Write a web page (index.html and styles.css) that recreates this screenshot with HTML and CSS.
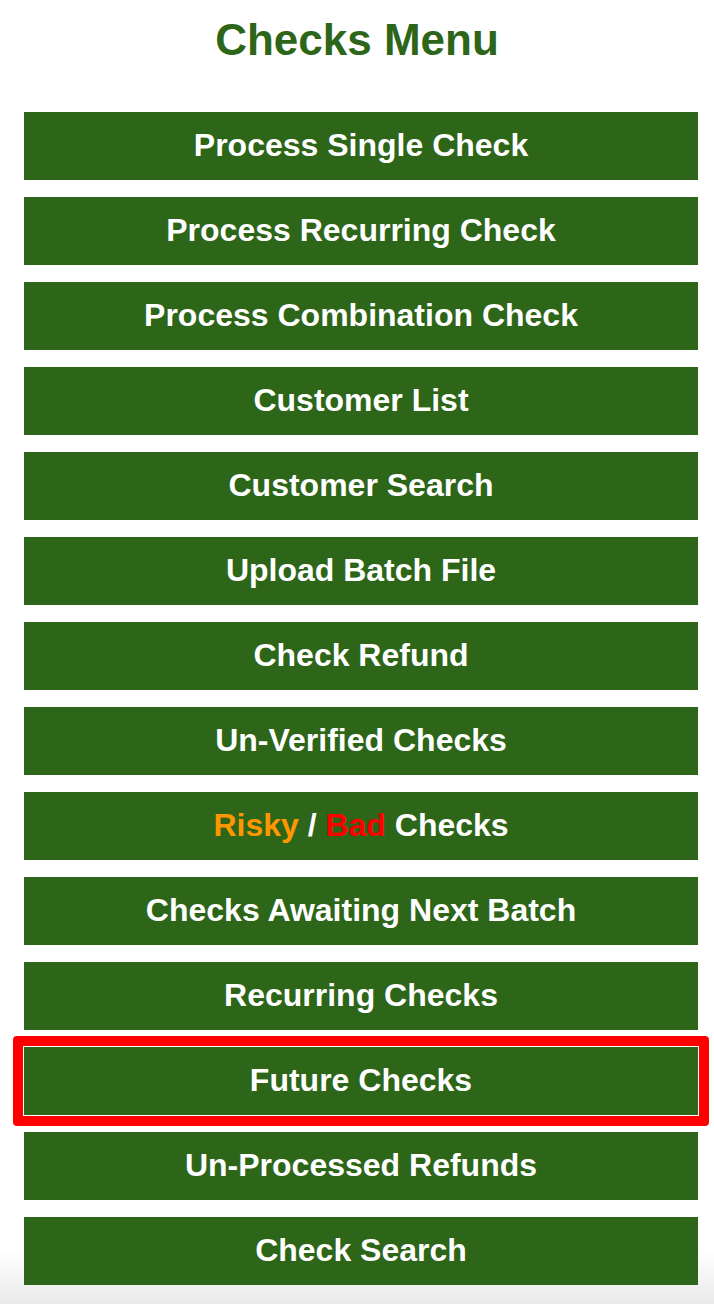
FILE: index.html
```html
<!DOCTYPE html>
<html lang="en">
<head>
  <meta charset="UTF-8">
  <meta name="viewport" content="width=device-width, initial-scale=1.0">
  <title>Checks Menu</title>
  <link rel="stylesheet" href="styles.css">
</head>
<body>
  <div class="page">
    <h1 class="page-title">Checks Menu</h1>

    <nav class="menu">
      <a class="menu-button" href="#">Process Single Check</a>
      <a class="menu-button" href="#">Process Recurring Check</a>
      <a class="menu-button" href="#">Process Combination Check</a>
      <a class="menu-button" href="#">Customer List</a>
      <a class="menu-button" href="#">Customer Search</a>
      <a class="menu-button" href="#">Upload Batch File</a>
      <a class="menu-button" href="#">Check Refund</a>
      <a class="menu-button" href="#">Un-Verified Checks</a>
      <a class="menu-button" href="#"><span class="risky">Risky</span> / <span class="bad">Bad</span> Checks</a>
      <a class="menu-button" href="#">Checks Awaiting Next Batch</a>
      <a class="menu-button" href="#">Recurring Checks</a>
      <a class="menu-button selected" href="#">Future Checks</a>
      <a class="menu-button" href="#">Un-Processed Refunds</a>
      <a class="menu-button" href="#">Check Search</a>
    </nav>
  </div>
</body>
</html>
```

FILE: styles.css
```css
:root {
  --green: #2d6519;
  --orange: #ff9600;
  --red: #ff0000;
}

html, body {
  margin: 0;
  padding: 0;
}

body {
  font-family: "Liberation Sans", Arial, sans-serif;
  min-height: 1304px;
  background: linear-gradient(to bottom, #ffffff 0, #ffffff 1250px, #e9e9e9 1304px);
}

.page {
  padding: 0 16px 0 24px;
}

.page-title {
  margin: 15px 0 0 -24px;
  margin-right: -16px;
  text-align: center;
  font-size: 44px;
  line-height: 50px;
  font-weight: bold;
  color: var(--green);
}

.menu {
  display: flex;
  flex-direction: column;
  gap: 17px;
  margin-top: 47px;
}

.menu-button {
  position: relative;
  display: block;
  height: 68px;
  line-height: 66px;
  padding-bottom: 2px;
  box-sizing: border-box;
  background-color: var(--green);
  color: #ffffff;
  text-align: center;
  text-decoration: none;
  font-size: 32px;
  font-weight: bold;
}

.menu-button.selected::after {
  content: "";
  position: absolute;
  top: -11px;
  left: -11px;
  right: -11px;
  bottom: -11px;
  border: 10px solid var(--red);
  border-radius: 4px;
  pointer-events: none;
}

.menu-button.selected {
  box-shadow: 0 0 0 1px #ffffff;
}

.risky {
  color: var(--orange);
}

.bad {
  color: var(--red);
}
```
